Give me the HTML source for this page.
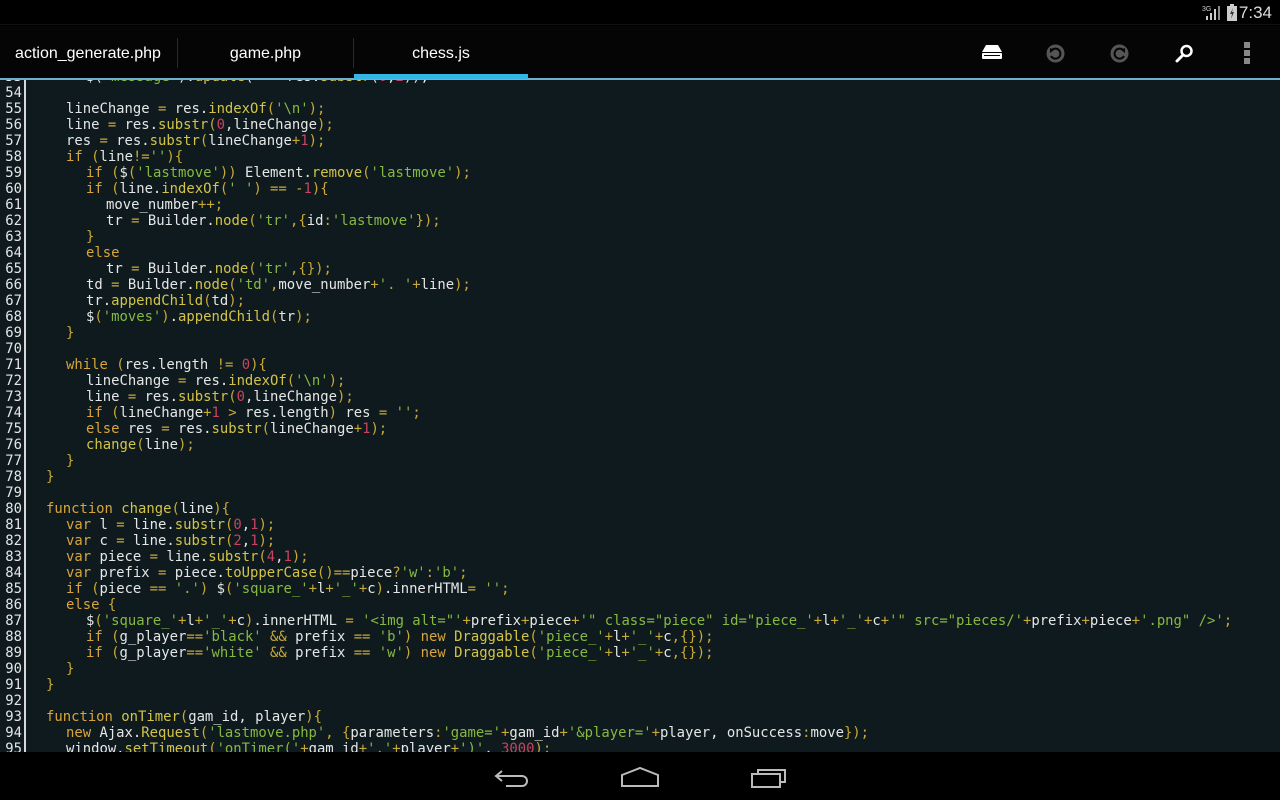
<!DOCTYPE html>
<html><head><meta charset="utf-8"><style>
*{margin:0;padding:0;box-sizing:border-box}
body{width:1280px;height:800px;background:#000;overflow:hidden;position:relative;font-family:"Liberation Sans",sans-serif}
#status{position:absolute;left:0;top:0;width:1280px;height:25px;background:#000;border-bottom:1px solid #111}
#clock{position:absolute;right:8px;top:3px;color:#ddd;font-size:17px}
#tabs{position:absolute;left:0;top:26px;width:1280px;height:52px;background:#050505}
.tab{position:absolute;top:0;height:52px;line-height:56px;color:#fff;font-size:16px;text-align:center}
.div{position:absolute;top:12px;width:1px;height:30px;background:#2a2a2a}
#blue{position:absolute;left:0;top:78px;width:1280px;height:2px;background:#6fb1cc}
#ind{position:absolute;left:354px;top:74px;width:174px;height:5px;background:#33b5e5}
#code{position:absolute;left:0;top:80px;width:1280px;height:672px;background:#0e1a1e;overflow:hidden;font-family:"DejaVu Sans Mono","Liberation Mono",monospace;font-size:13.9px;color:#e6e6e6}
#lines{position:absolute;left:0;top:2px;width:1280px}
#gut{position:absolute;left:24px;top:0;width:2px;height:672px;background:#d8d8d8}
.l{position:absolute;left:0;height:16px;line-height:16px;white-space:pre}
.n{position:absolute;left:0;width:22px;text-align:right;color:#e6e6e6}
.c{position:absolute;white-space:pre}
.k{color:#d9a53a}.p{color:#c9a934}.m{color:#d3c447}.s{color:#86b940}.d{color:#c8435e}
#nav{position:absolute;left:0;top:752px;width:1280px;height:48px;background:#000}
</style></head><body>
<div id="status">
<svg style="position:absolute;left:1202px;top:4px" width="20" height="16"><text x="0" y="7" font-size="7" fill="#ccc" font-family="Liberation Sans">3G</text><rect x="4" y="12" width="2" height="4" fill="#ccc"/><rect x="8" y="9" width="2" height="7" fill="#ccc"/><rect x="12" y="5" width="2" height="11" fill="#ccc"/><rect x="16" y="2" width="2" height="14" fill="#888"/></svg>
<svg style="position:absolute;left:1227px;top:4px" width="10" height="17"><rect x="3" y="0" width="4" height="2" fill="#ccc"/><rect x="0" y="2" width="10" height="15" fill="#ccc"/><path d="M6 4 L3 10 H5 L4 15 L7 8 H5Z" fill="#333"/></svg>
<div id="clock">7:34</div>
</div>
<div id="tabs">
<div class="tab" style="left:0;width:176px">action_generate.php</div>
<div class="div" style="left:177px"></div>
<div class="tab" style="left:178px;width:175px">game.php</div>
<div class="div" style="left:353px"></div>
<div class="tab" style="left:354px;width:174px">chess.js</div>
<svg style="position:absolute;left:982px;top:19px" width="20" height="14"><path d="M4 0 H16 L20 7 H0Z" fill="#fff"/><rect x="0" y="8" width="20" height="6" rx="1" fill="#fff"/><rect x="2" y="10" width="16" height="1" fill="#050505"/></svg>
<svg style="position:absolute;left:1046px;top:18px" width="19" height="19"><circle cx="9.5" cy="9.5" r="9" fill="#555"/><path d="M6 6 A5 5 0 1 1 5 12" stroke="#050505" stroke-width="2" fill="none"/><path d="M4 4 L8 6 L4 9Z" fill="#050505"/></svg>
<svg style="position:absolute;left:1110px;top:18px" width="19" height="19"><circle cx="9.5" cy="9.5" r="9" fill="#555"/><path d="M13 6 A5 5 0 1 0 14 12" stroke="#050505" stroke-width="2" fill="none"/><path d="M15 4 L11 6 L15 9Z" fill="#050505"/></svg>
<svg style="position:absolute;left:1175px;top:18px" width="19" height="19"><circle cx="11.5" cy="7" r="5" stroke="#fff" stroke-width="2.5" fill="none"/><path d="M8 11 L2 17" stroke="#fff" stroke-width="3" stroke-linecap="round"/></svg>
<svg style="position:absolute;left:1244px;top:16px" width="8" height="22"><rect x="0" y="0" width="6" height="6" fill="#888"/><rect x="0" y="8" width="6" height="6" fill="#888"/><rect x="0" y="16" width="6" height="6" fill="#888"/></svg>
</div>
<div id="blue"></div><div id="ind"></div>
<div id="code">
<div id="gut"></div>
<div id="lines">
<div class="l" style="top:-13px"><span class="n">53</span><span class="c" style="left:86px">$(<span class="s">'message'</span>).<span class="m">update</span>(<span class="s">'&nbsp;'</span>+res.<span class="m">substr</span>(<span class="d">0</span>,<span class="d">2</span>));</span></div>
<div class="l" style="top:3px"><span class="n">54</span></div>
<div class="l" style="top:19px"><span class="n">55</span><span class="c" style="left:66px">lineChange <span class="p">=</span> res.<span class="m">indexOf</span><span class="p">(</span><span class="s">'\n'</span><span class="p">);</span></span></div>
<div class="l" style="top:35px"><span class="n">56</span><span class="c" style="left:66px">line <span class="p">=</span> res.<span class="m">substr</span><span class="p">(</span><span class="d">0</span>,lineChange<span class="p">);</span></span></div>
<div class="l" style="top:51px"><span class="n">57</span><span class="c" style="left:66px">res <span class="p">=</span> res.<span class="m">substr</span><span class="p">(</span>lineChange<span class="p">+</span><span class="d">1</span><span class="p">);</span></span></div>
<div class="l" style="top:67px"><span class="n">58</span><span class="c" style="left:66px"><span class="k">if</span> <span class="p">(</span>line<span class="p">!=</span><span class="s">''</span><span class="p">){</span></span></div>
<div class="l" style="top:83px"><span class="n">59</span><span class="c" style="left:86px"><span class="k">if</span> <span class="p">(</span>$<span class="p">(</span><span class="s">'lastmove'</span><span class="p">))</span> Element.<span class="m">remove</span><span class="p">(</span><span class="s">'lastmove'</span><span class="p">);</span></span></div>
<div class="l" style="top:99px"><span class="n">60</span><span class="c" style="left:86px"><span class="k">if</span> <span class="p">(</span>line.<span class="m">indexOf</span><span class="p">(</span><span class="s">' '</span><span class="p">) == -</span><span class="d">1</span><span class="p">){</span></span></div>
<div class="l" style="top:115px"><span class="n">61</span><span class="c" style="left:106px">move_number<span class="p">++;</span></span></div>
<div class="l" style="top:131px"><span class="n">62</span><span class="c" style="left:106px">tr <span class="p">=</span> Builder.<span class="m">node</span><span class="p">(</span><span class="s">'tr'</span><span class="p">,{</span>id<span class="p">:</span><span class="s">'lastmove'</span><span class="p">});</span></span></div>
<div class="l" style="top:147px"><span class="n">63</span><span class="c" style="left:86px"><span class="p">}</span></span></div>
<div class="l" style="top:163px"><span class="n">64</span><span class="c" style="left:86px"><span class="k">else</span></span></div>
<div class="l" style="top:179px"><span class="n">65</span><span class="c" style="left:106px">tr <span class="p">=</span> Builder.<span class="m">node</span><span class="p">(</span><span class="s">'tr'</span><span class="p">,{});</span></span></div>
<div class="l" style="top:195px"><span class="n">66</span><span class="c" style="left:86px">td <span class="p">=</span> Builder.<span class="m">node</span><span class="p">(</span><span class="s">'td'</span><span class="p">,</span>move_number<span class="p">+</span><span class="s">'. '</span><span class="p">+</span>line<span class="p">);</span></span></div>
<div class="l" style="top:211px"><span class="n">67</span><span class="c" style="left:86px">tr.<span class="m">appendChild</span><span class="p">(</span>td<span class="p">);</span></span></div>
<div class="l" style="top:227px"><span class="n">68</span><span class="c" style="left:86px">$<span class="p">(</span><span class="s">'moves'</span><span class="p">)</span>.<span class="m">appendChild</span><span class="p">(</span>tr<span class="p">);</span></span></div>
<div class="l" style="top:243px"><span class="n">69</span><span class="c" style="left:66px"><span class="p">}</span></span></div>
<div class="l" style="top:259px"><span class="n">70</span></div>
<div class="l" style="top:275px"><span class="n">71</span><span class="c" style="left:66px"><span class="k">while</span> <span class="p">(</span>res.length <span class="p">!=</span> <span class="d">0</span><span class="p">){</span></span></div>
<div class="l" style="top:291px"><span class="n">72</span><span class="c" style="left:86px">lineChange <span class="p">=</span> res.<span class="m">indexOf</span><span class="p">(</span><span class="s">'\n'</span><span class="p">);</span></span></div>
<div class="l" style="top:307px"><span class="n">73</span><span class="c" style="left:86px">line <span class="p">=</span> res.<span class="m">substr</span><span class="p">(</span><span class="d">0</span>,lineChange<span class="p">);</span></span></div>
<div class="l" style="top:323px"><span class="n">74</span><span class="c" style="left:86px"><span class="k">if</span> <span class="p">(</span>lineChange<span class="p">+</span><span class="d">1</span> <span class="p">&gt;</span> res.length<span class="p">)</span> res <span class="p">=</span> <span class="s">''</span><span class="p">;</span></span></div>
<div class="l" style="top:339px"><span class="n">75</span><span class="c" style="left:86px"><span class="k">else</span> res <span class="p">=</span> res.<span class="m">substr</span><span class="p">(</span>lineChange<span class="p">+</span><span class="d">1</span><span class="p">);</span></span></div>
<div class="l" style="top:355px"><span class="n">76</span><span class="c" style="left:86px"><span class="m">change</span><span class="p">(</span>line<span class="p">);</span></span></div>
<div class="l" style="top:371px"><span class="n">77</span><span class="c" style="left:66px"><span class="p">}</span></span></div>
<div class="l" style="top:387px"><span class="n">78</span><span class="c" style="left:46px"><span class="p">}</span></span></div>
<div class="l" style="top:403px"><span class="n">79</span></div>
<div class="l" style="top:419px"><span class="n">80</span><span class="c" style="left:46px"><span class="k">function</span> <span class="m">change</span><span class="p">(</span>line<span class="p">){</span></span></div>
<div class="l" style="top:435px"><span class="n">81</span><span class="c" style="left:66px"><span class="k">var</span> l <span class="p">=</span> line.<span class="m">substr</span><span class="p">(</span><span class="d">0</span>,<span class="d">1</span><span class="p">);</span></span></div>
<div class="l" style="top:451px"><span class="n">82</span><span class="c" style="left:66px"><span class="k">var</span> c <span class="p">=</span> line.<span class="m">substr</span><span class="p">(</span><span class="d">2</span>,<span class="d">1</span><span class="p">);</span></span></div>
<div class="l" style="top:467px"><span class="n">83</span><span class="c" style="left:66px"><span class="k">var</span> piece <span class="p">=</span> line.<span class="m">substr</span><span class="p">(</span><span class="d">4</span>,<span class="d">1</span><span class="p">);</span></span></div>
<div class="l" style="top:483px"><span class="n">84</span><span class="c" style="left:66px"><span class="k">var</span> prefix <span class="p">=</span> piece.<span class="m">toUpperCase</span><span class="p">()==</span>piece<span class="p">?</span><span class="s">'w'</span><span class="p">:</span><span class="s">'b'</span><span class="p">;</span></span></div>
<div class="l" style="top:499px"><span class="n">85</span><span class="c" style="left:66px"><span class="k">if</span> <span class="p">(</span>piece <span class="p">==</span> <span class="s">'.'</span><span class="p">)</span> $<span class="p">(</span><span class="s">'square_'</span><span class="p">+</span>l<span class="p">+</span><span class="s">'_'</span><span class="p">+</span>c<span class="p">)</span>.innerHTML<span class="p">=</span> <span class="s">''</span><span class="p">;</span></span></div>
<div class="l" style="top:515px"><span class="n">86</span><span class="c" style="left:66px"><span class="k">else</span> <span class="p">{</span></span></div>
<div class="l" style="top:531px"><span class="n">87</span><span class="c" style="left:86px">$<span class="p">(</span><span class="s">'square_'</span><span class="p">+</span>l<span class="p">+</span><span class="s">'_'</span><span class="p">+</span>c<span class="p">)</span>.innerHTML <span class="p">=</span> <span class="s">'&lt;img alt="'</span><span class="p">+</span>prefix<span class="p">+</span>piece<span class="p">+</span><span class="s">'" class="piece" id="piece_'</span><span class="p">+</span>l<span class="p">+</span><span class="s">'_'</span><span class="p">+</span>c<span class="p">+</span><span class="s">'" src="pieces/'</span><span class="p">+</span>prefix<span class="p">+</span>piece<span class="p">+</span><span class="s">'.png" /&gt;'</span><span class="p">;</span></span></div>
<div class="l" style="top:547px"><span class="n">88</span><span class="c" style="left:86px"><span class="k">if</span> <span class="p">(</span>g_player<span class="p">==</span><span class="s">'black'</span> <span class="p">&amp;&amp;</span> prefix <span class="p">==</span> <span class="s">'b'</span><span class="p">)</span> <span class="k">new</span> <span class="m">Draggable</span><span class="p">(</span><span class="s">'piece_'</span><span class="p">+</span>l<span class="p">+</span><span class="s">'_'</span><span class="p">+</span>c<span class="p">,{});</span></span></div>
<div class="l" style="top:563px"><span class="n">89</span><span class="c" style="left:86px"><span class="k">if</span> <span class="p">(</span>g_player<span class="p">==</span><span class="s">'white'</span> <span class="p">&amp;&amp;</span> prefix <span class="p">==</span> <span class="s">'w'</span><span class="p">)</span> <span class="k">new</span> <span class="m">Draggable</span><span class="p">(</span><span class="s">'piece_'</span><span class="p">+</span>l<span class="p">+</span><span class="s">'_'</span><span class="p">+</span>c<span class="p">,{});</span></span></div>
<div class="l" style="top:579px"><span class="n">90</span><span class="c" style="left:66px"><span class="p">}</span></span></div>
<div class="l" style="top:595px"><span class="n">91</span><span class="c" style="left:46px"><span class="p">}</span></span></div>
<div class="l" style="top:611px"><span class="n">92</span></div>
<div class="l" style="top:627px"><span class="n">93</span><span class="c" style="left:46px"><span class="k">function</span> <span class="m">onTimer</span><span class="p">(</span>gam_id, player<span class="p">){</span></span></div>
<div class="l" style="top:643px"><span class="n">94</span><span class="c" style="left:66px"><span class="k">new</span> Ajax.<span class="m">Request</span><span class="p">(</span><span class="s">'lastmove.php'</span><span class="p">,</span> <span class="p">{</span>parameters<span class="p">:</span><span class="s">'game='</span><span class="p">+</span>gam_id<span class="p">+</span><span class="s">'&amp;player='</span><span class="p">+</span>player, onSuccess<span class="p">:</span>move<span class="p">});</span></span></div>
<div class="l" style="top:659px"><span class="n">95</span><span class="c" style="left:66px">window.<span class="m">setTimeout</span><span class="p">(</span><span class="s">'onTimer('</span><span class="p">+</span>gam_id<span class="p">+</span><span class="s">','</span><span class="p">+</span>player<span class="p">+</span><span class="s">')'</span>, <span class="d">3000</span><span class="p">);</span></span></div>
</div>
</div>
<div id="nav">
<svg style="position:absolute;left:494px;top:16px" width="36" height="20"><path d="M8 3 L2 8 L8 13 M2 8 H28 A5 5 0 0 1 28 18 H12" stroke="#bbb" stroke-width="2" fill="none"/></svg>
<svg style="position:absolute;left:620px;top:14px" width="40" height="22"><path d="M2 9 L20 2 L38 9 V20 H2Z" stroke="#bbb" stroke-width="2" fill="none"/></svg>
<svg style="position:absolute;left:750px;top:15px" width="38" height="22"><rect x="2" y="7" width="28" height="13" stroke="#bbb" stroke-width="2" fill="none"/><path d="M8 7 V3 H35 V15 H30" stroke="#bbb" stroke-width="2" fill="none"/></svg>
</div>
</body></html>
